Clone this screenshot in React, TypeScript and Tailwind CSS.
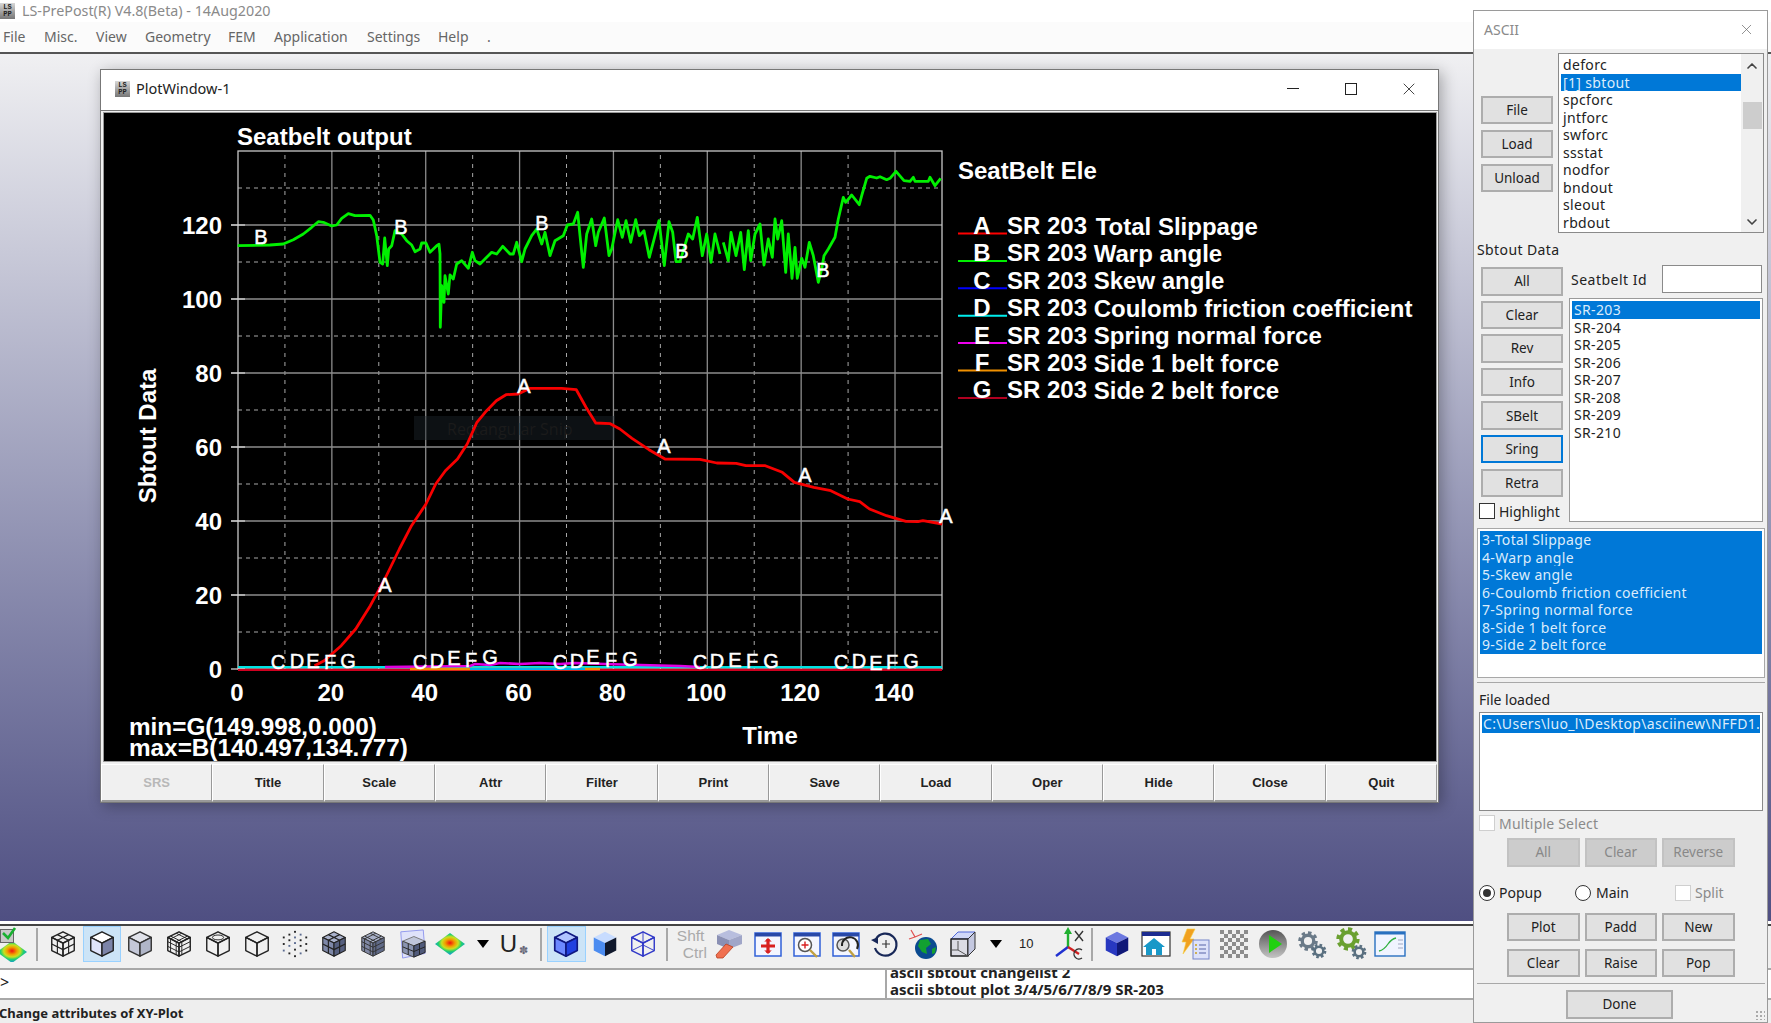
import type { ReactNode } from "react";
import { ChevronDown, ChevronUp, X } from "lucide-react";

const toPoints = (pts: number[][], ox: number, oy: number, sx: number, sy: number) =>
  pts.map(([x, y]) => `${(ox + x / sx).toFixed(1)},${(oy + y / sy).toFixed(1)}`).join(" ");

// traced off the reference, in zoomed crop coordinates
const greenA = [[53,320],[150,318],[190,315],[220,302],[250,285],[275,265],[295,248],[310,250],[335,261],[350,258],[365,238],[385,224],[405,230],[450,229],[460,243],[470,290],[480,370],[488,375],[494,297],[502,380],[506,330],[515,320],[525,275],[545,285],[560,305],[575,318],[585,338],[600,330],[605,312],[618,312],[630,340],[650,320],[657,316],[660,345],[661,565],[665,440],[672,490],[675,410],[685,465],[690,408],[700,420],[710,375],[725,365],[745,388],[757,340],[765,365],[780,375],[800,355],[815,340],[830,345],[848,322],[870,345],[880,345],[890,310],[905,368],[915,330],[935,290],[950,270],[965,315],[975,280],[990,350],[1005,305],[1030,290],[1042,258],[1060,255],[1073,220],[1080,290],[1090,385],[1100,285],[1115,240],[1127,320],[1135,280],[1153,237],[1167,350],[1175,330],[1193,242],[1207,295],[1218,245],[1232,310],[1247,242],[1258,290],[1272,275],[1288,355],[1317,245],[1333,380],[1347,248],[1358,280],[1368,368],[1380,368],[1405,285],[1418,300],[1432,235],[1447,350],[1460,285],[1473,370],[1485,285],[1500,345]];
const greenB = [[670,310],[685,365],[693,280],[708,350],[722,280],[733,392],[745,275],[752,365],[765,285],[780,255],[792,378],[805,300],[817,355],[825,240],[833,300],[845,245],[857,400],[865,285],[876,418],[885,325],[892,418],[905,358],[915,385],[928,310],[940,350],[955,430],[965,390],[972,350],[985,330],[1005,295],[1015,240],[1030,175],[1037,190],[1055,168],[1078,197],[1085,170],[1100,118],[1110,112],[1130,117],[1140,113],[1160,122],[1170,118],[1188,97],[1212,125],[1230,127],[1240,115],[1245,127],[1285,127],[1290,115],[1305,140],[1322,118]];
const red = [[195,860],[215,845],[250,800],[280,750],[310,680],[340,600],[370,510],[395,440],[425,375],[445,315],[465,275],[490,240],[510,195],[530,130],[550,95],[570,65],[590,47],[615,45],[640,28],[705,28],[735,32],[755,85],[775,132],[805,134],[825,150],[850,178],[885,212],[918,240],[990,241],[1025,252],[1065,253],[1085,260],[1125,260],[1160,280],[1185,310],[1225,325],[1260,335],[1295,360],[1320,368],[1340,390],[1375,410],[1415,427],[1440,428],[1450,425],[1490,435]];

const X0 = 238, X1 = 942, Y0 = 670, Y1 = 152;
const xAt = (t: number) => X0 + t * 4.693;
const yAt = (v: number) => Y0 - v * 3.7;

const curveLabels: [string, number, number][] = [
  ["B",261,238],["B",401,228],["B",542,224],["B",682,252],["B",823,271],
  ["A",385,586],["A",524,387],["A",664,447],["A",805,476],["A",946,517],
  ["C",278,663],["D",297,662],["E",313,662],["F",330,663],["G",348,662],
  ["C",420,663],["D",437,662],["E",454,659],["F",471,661],["G",490,658],
  ["C",560,663],["D",577,662],["E",593,658],["F",611,661],["G",630,660],
  ["C",700,663],["D",717,662],["E",735,661],["F",752,662],["G",771,662],
  ["C",841,663],["D",859,662],["E",876,664],["F",892,663],["G",911,662],
];

const legend = [
  ["A", "#ff0000", "Total Slippage"],
  ["B", "#00ee00", "Warp angle"],
  ["C", "#0000ff", "Skew angle"],
  ["D", "#00eeee", "Coulomb friction coefficient"],
  ["E", "#ee00ee", "Spring normal force"],
  ["F", "#f09000", "Side 1 belt force"],
  ["G", "#b00020", "Side 2 belt force"],
];

function Chart() {
  const solidX = [20, 40, 60, 80, 100, 120, 140];
  const dashX = [10, 30, 50, 70, 90, 110, 130];
  const solidY = [20, 40, 60, 80, 100, 120];
  const dashY = [10, 30, 50, 70, 90, 110, 130];
  return (
    <svg viewBox="104 114 1332 648" className="block w-[1332px] h-[648px]" fontFamily="'Liberation Sans', sans-serif" fill="#fff">
      <text x="237" y="137" dominantBaseline="central" fontSize="24" fontWeight="700">Seatbelt output</text>
      {dashX.map((t) => <line key={t} x1={xAt(t)} x2={xAt(t)} y1={156} y2={Y0} stroke="#a8a8a8" strokeDasharray="4 5" />)}
      {dashY.map((v) => <line key={v} x1={X0} x2={X1} y1={yAt(v)} y2={yAt(v)} stroke="#a8a8a8" strokeDasharray="4 4" />)}
      {solidX.map((t) => <line key={t} x1={xAt(t)} x2={xAt(t)} y1={Y1} y2={Y0} stroke="#8c8c8c" strokeWidth="1.3" />)}
      {solidY.map((v) => <line key={v} x1={231} x2={X1} y1={yAt(v)} y2={yAt(v)} stroke="#8c8c8c" strokeWidth="1.3" />)}
      <rect x={X0} y={Y1} width={X1 - X0} height={Y0 - Y1} fill="none" stroke="#c8c8c8" strokeWidth="1.3" />
      {[...solidY, 0].map((v) => <line key={v} x1={231} x2={245} y1={yAt(v)} y2={yAt(v)} stroke="#d0d0d0" strokeWidth="1.3" />)}

      <rect x="414" y="417" width="201" height="24" fill="#1c262c" fillOpacity="0.45" />
      <text x="447" y="430" dominantBaseline="central" fontSize="16" fill="#1b1b1b" fontFamily="'Open Sans', sans-serif">Rectangular Snip</text>

      <line x1={X0} x2={X1} y1="668" y2="668" stroke="#00e4e4" strokeWidth="2" />
      <polyline points="385,668 470,667 475,665 490,666 500,664 520,665 540,664 560,665 575,664 605,665 640,666 680,667 700,668" fill="none" stroke="#e000e0" strokeWidth="2.6" />
      <line x1={X0} x2={X1} y1="671" y2="671" stroke="#d00020" strokeWidth="2" />
      <line x1="410" x2="600" y1="670" y2="670" stroke="#f09000" strokeWidth="2.4" />
      <line x1="470" x2="585" y1="670" y2="670" stroke="#00b4f0" strokeWidth="2.2" />
      <polyline points={toPoints(greenA, 220, 140, 3, 3)} fill="none" stroke="#00f000" strokeWidth="2.8" strokeLinejoin="round" />
      <polyline points={toPoints(greenB, 500, 140, 3, 3)} fill="none" stroke="#00f000" strokeWidth="2.8" strokeLinejoin="round" />
      <polyline points={toPoints(red, 220, 380, 2.063, 3)} fill="none" stroke="#f80000" strokeWidth="2.8" strokeLinejoin="round" />
      <g stroke="#fff" strokeWidth="0.5">
        {curveLabels.map(([l, x, y], i) => (
          <text key={i} x={x} y={y} textAnchor="middle" dominantBaseline="central" fontSize="20">{l}</text>
        ))}
      </g>

      <g fontSize="24" fontWeight="700" dominantBaseline="central">
        {[0, 20, 40, 60, 80, 100, 120].map((v) => (
          <text key={v} x="222" y={yAt(v)} textAnchor="end">{v}</text>
        ))}
        {[0, 20, 40, 60, 80, 100, 120, 140].map((t) => (
          <text key={t} x={xAt(t) - 1} y="693" textAnchor="middle">{t}</text>
        ))}
        <text x="770" y="736" textAnchor="middle">Time</text>
        <text x="147" y="437" textAnchor="middle" transform="rotate(-90 147 437)">Sbtout Data</text>
        <text x="129" y="727" fontSize="24.3">min=G(149.998,0.000)</text>
        <text x="129" y="748" fontSize="24.3">max=B(140.497,134.777)</text>
        <text x="958" y="171">SeatBelt Ele</text>
        {legend.map(([l, c, t], i) => {
          const y = 226.5 + i * 27.4;
          return (
            <g key={l}>
              <line x1="958" x2="1007" y1={y + 8} y2={y + 8} stroke={c} strokeWidth="2" />
              <text x="982" y={y} textAnchor="middle">{l}</text>
              <text x="1007" y={y}>SR 203 <tspan dx={i === 0 ? 2 : 0}>{t}</tspan></text>
            </g>
          );
        })}
      </g>
    </svg>
  );
}

function LsLogo() {
  return (
    <div className="w-[15px] h-[16px] bg-linear-to-b from-[#d8d8d8] to-[#777] flex flex-col items-center justify-center text-[7px] leading-[7px] font-bold text-[#222] font-['Liberation_Mono',monospace]">
      <span>LS</span>
      <span>PP</span>
    </div>
  );
}

const TOP = "16,3 28,9 16,15 4,9";
const LEFT = "4,9 16,15 16,29 4,23";
const RIGHT = "28,9 16,15 16,29 28,23";

function Cube({ top = "none", left = "none", right = "none", stroke = "#222", w = 1.5, children }: { top?: string; left?: string; right?: string; stroke?: string; w?: number; children?: ReactNode }) {
  return (
    <svg width="30" height="32" viewBox="0 0 32 32">
      <g stroke={stroke} strokeWidth={w} strokeLinejoin="round">
        <polygon points={TOP} fill={top} />
        <polygon points={LEFT} fill={left} />
        <polygon points={RIGHT} fill={right} />
        {children}
      </g>
    </svg>
  );
}

const gridLines = (
  <g strokeWidth="1.2">
    <path d="M10 6 22 12 22 26M22 6 10 12 10 26M4 16 16 22 28 16" fill="none" />
  </g>
);

const fineLines = (
  <path d="M7 7.5 19 13.5V27.5M13 4.5 25 10.5M19 4.5 7 10.5V24.500M25 7.5 13 13.500V27.5M4 13.500 16 19.500 28 13.500M4 18.500 16 24.500 28 18.500" fill="none" strokeWidth="1" />
);

function Dotted() {
  return (
    <svg width="30" height="32" viewBox="0 0 32 32" fill="#222">
      {[[16,3],[10,6],[22,6],[4,9],[28,9],[16,9],[10,12],[22,12],[16,15],[4,16],[28,16],[10,18],[22,18],[16,22],[4,23],[28,23],[10,26],[22,26],[16,29]].map(([x, y], i) => (
        <rect key={i} x={x - 1} y={y - 1} width="2" height="2" fill={i % 3 === 2 ? "#5a6a90" : "#222"} />
      ))}
    </svg>
  );
}

function ContourDiamond({ id }: { id: string }) {
  return (
    <svg width="32" height="24" viewBox="0 0 32 24">
      <defs>
        <radialGradient id={id} cx="0.5" cy="0.45" r="0.55">
          <stop offset="0" stopColor="#f01010" />
          <stop offset="0.3" stopColor="#f0a000" />
          <stop offset="0.5" stopColor="#c8e020" />
          <stop offset="0.7" stopColor="#20d070" />
          <stop offset="1" stopColor="#1890e0" />
        </radialGradient>
      </defs>
      <polygon points="16,1 31,12 16,23 1,12" fill={`url(#${id})`} />
    </svg>
  );
}

function WindowFrame({ children, color = "#3060d8" }: { children: ReactNode; color?: string }) {
  return (
    <svg width="30" height="30" viewBox="0 0 30 30" fill="none">
      <rect x="2" y="4" width="26" height="23" fill="#f4f6ff" stroke={color} strokeWidth="1.5" />
      <rect x="2" y="4" width="26" height="3.5" fill="#2848a8" />
      {children}
    </svg>
  );
}

function Gear({ cx, cy, r, color = "#6a7a88" }: { cx: number; cy: number; r: number; color?: string }) {
  return (
    <g fill="none">
      <circle cx={cx} cy={cy} r={r} stroke={color} strokeWidth={r * 0.45} strokeDasharray={`${r * 0.42} ${r * 0.36}`} />
      <circle cx={cx} cy={cy} r={r * 0.72} stroke={color} strokeWidth={r * 0.42} />
    </g>
  );
}

const Slot = ({ children, active }: { children: ReactNode; active?: boolean }) => (
  <div className={active ? "w-[39px] h-[36px] flex items-center justify-center bg-[#cce4f7] border border-[#99d1ff]" : "w-[39px] h-[36px] flex items-center justify-center"}>
    {children}
  </div>
);
const Sep = () => <div className="w-[2px] h-[33px] bg-[#a8a8a8] shrink-0" />;
const Caret = () => <div className="w-0 h-0 border-l-[6px] border-r-[6px] border-t-[8px] border-l-transparent border-r-transparent border-t-black" />;

function Toolbar() {
  return (
    <div className="h-[44px] border-t-2 border-[#444] bg-[#f0f0f0] flex items-center pb-[6px] shrink-0 overflow-hidden">
      <div className="w-[28px] h-[36px] relative shrink-0 overflow-hidden">
        <div className="absolute left-[-4px] top-[14px]"><ContourDiamond id="contourA" /></div>
        <div className="absolute left-0 top-[3px] w-[14px] h-[14px] bg-[#c8c8c8] border border-[#666]" />
        <svg className="absolute left-[1px] top-0" width="16" height="16" viewBox="0 0 16 16"><path d="M2 7 7 12 14 2" fill="none" stroke="#18b030" strokeWidth="2.6" /></svg>
      </div>
      <div className="w-[8px]" />
      <Sep />
      <div className="w-[5.6px]" />
      <div className="flex items-center [&>div]:!w-[38.75px]">
        <Slot><Cube>{gridLines}</Cube></Slot>
        <Slot><div className="w-[38px] h-[36px] -m-px flex items-center justify-center bg-[#cce4f7] border border-[#99d1ff]"><Cube top="#fff" left="#dfe4fb" right="#7c84a8" /></div></Slot>
        <Slot><Cube top="#e0e2ea" left="#c4c8d8" right="#b0b6c8" stroke="#333" /></Slot>
        <Slot><Cube>{fineLines}</Cube></Slot>
        <Slot><Cube><ellipse cx="16" cy="9" rx="6" ry="2.6" fill="none" strokeWidth="1" /></Cube></Slot>
        <Slot><Cube /></Slot>
        <Slot><Dotted /></Slot>
        <Slot><Cube top="#aab2cc" left="#7e88a8" right="#566080" stroke="#222" w={1.2}>{gridLines}</Cube></Slot>
        <Slot><Cube top="#a8b0c8" left="#8088a4" right="#606a88" stroke="#333" w={1}>{fineLines}</Cube></Slot>
        <Slot>
          <svg width="30" height="32" viewBox="0 0 32 32">
            <polygon points="4,3 28,1 30,26 6,31" fill="#dfe2fa" stroke="#8f96ee" />
            <polygon points="18,8 30,13 18,18 6,13" fill="#c0c6da" stroke="#777" />
            <polygon points="6,13 18,18 18,30 6,25" fill="#8a94b0" stroke="#444" />
            <polygon points="30,13 18,18 18,30 30,25" fill="#505a7a" stroke="#222" />
            <path d="M12 15.500V27.500M24 15.500V27.500M6 19 18 24 30 19" fill="none" stroke="#222" strokeWidth="1" />
          </svg>
        </Slot>
        <Slot><ContourDiamond id="contourB" /></Slot>
      </div>
      <div className="w-[26px] flex justify-center shrink-0"><Caret /></div>
      <div className="w-[30px] flex items-end justify-center pl-[6px] shrink-0 font-['Liberation_Sans',sans-serif] text-[24px] leading-none text-[#222]">
        U<span className="text-[11px] text-[#667] ml-[2px]">✽</span>
      </div>
      <div className="w-[14px]" />
      <Sep />
      <div className="w-[5px]" />
      <Slot active>
        <Cube top="#b0c4ff" left="#6c88ff" right="#2040e0" stroke="#101880" w={1.8} />
      </Slot>
      <div className="w-[38px] flex justify-center shrink-0"><Cube top="#c8dcff" left="#4c8cf0" right="#10182c" stroke="none" /></div>
      <div className="w-[38px] flex justify-center shrink-0">
        <Cube stroke="#3038c8" w={1.5}><path d="M16 3V17M4 23 16 17 28 23" fill="none" strokeWidth="1" /></Cube>
      </div>
      <div className="w-[4px]" />
      <Sep />
      <div className="w-[4px]" />
      <div className="w-[38px] shrink-0 text-[15.500px] leading-[17px] text-[#aaa] font-['Liberation_Sans',sans-serif] pl-[5px]">
        <div>Shft</div>
        <div className="pl-[6px]">Ctrl</div>
      </div>
      <Slot>
        <svg width="30" height="30" viewBox="0 0 30 30">
          <polygon points="3,6 15,1 28,6 15,11" fill="#b8bede" />
          <polygon points="3,6 15,11 15,20 3,15" fill="#8a90b4" />
          <polygon points="28,6 15,11 15,20 28,15" fill="#a0a6c8" />
          <polygon points="2,26 12,15 19,18 9,29 3,29" fill="#f07050" stroke="#b84020" strokeWidth="0.8" />
        </svg>
      </Slot>
      <Slot>
        <WindowFrame>
          <path d="M15 10V24M8 17H22" stroke="#d82020" strokeWidth="3.2" />
          <path d="M12 12.500 15 9.500 18 12.500M12 21.500 15 24.500 18 21.500" fill="#d82020" stroke="#d82020" />
        </WindowFrame>
      </Slot>
      <Slot>
        <WindowFrame>
          <circle cx="13" cy="16" r="6.5" fill="#fff" stroke="#555" strokeWidth="1.5" />
          <path d="M13 12.500V19.500M9.500 16H16.500" stroke="#d82020" strokeWidth="1.4" />
          <path d="M18 21 25 28" stroke="#c0a040" strokeWidth="2.4" />
        </WindowFrame>
      </Slot>
      <Slot>
        <WindowFrame>
          <circle cx="12" cy="16" r="6" fill="#ddd" stroke="#555" strokeWidth="1.5" />
          <path d="M11 17 A8 8 0 1 1 26 20" fill="none" stroke="#222" strokeWidth="2" />
          <path d="M18 21 24 28" stroke="#c0a040" strokeWidth="2.4" />
        </WindowFrame>
      </Slot>
      <Slot>
        <svg width="30" height="30" viewBox="0 0 30 30" fill="none">
          <path d="M6 10A11 11 0 1 1 5 19" stroke="#182858" strokeWidth="2.2" />
          <path d="M1 11 8 8 8 15Z" fill="#182858" />
          <path d="M16 11V19M12 15H20" stroke="#333" strokeWidth="1.2" />
        </svg>
      </Slot>
      <Slot>
        <svg width="32" height="32" viewBox="0 0 32 32" fill="none">
          <path d="M3 2 7 9 1 11M7 9 14 6" stroke="#e05050" strokeWidth="1.2" />
          <circle cx="18" cy="20" r="11" fill="#0a4a90" />
          <path d="M12 12 20 11 23 16 18 20 19 26 14 24 10 18Z" fill="#12a030" />
          <path d="M24 21 28 19 27 25 24 26Z" fill="#12a030" />
        </svg>
      </Slot>
      <Slot>
        <svg width="30" height="30" viewBox="0 0 30 30" fill="none" strokeLinejoin="round">
          <polygon points="3,10 10,3 27,3 20,10" fill="#d0d8f8" stroke="#5068d8" />
          <polygon points="3,10 20,10 20,27 3,27" fill="#dcdce4" stroke="#222" strokeWidth="1.5" />
          <polygon points="20,10 27,3 27,20 20,27" fill="#c4c8e0" stroke="#333" />
          <path d="M10 12V21H3M10 21 20 27" stroke="#555" />
        </svg>
      </Slot>
      <div className="w-[27px] flex justify-center shrink-0"><Caret /></div>
      <div className="w-[33px] text-center shrink-0 text-[13px] text-[#222] font-['Liberation_Sans',sans-serif]">10</div>
      <div className="w-[8px]" />
      <div className="w-[40px] flex justify-center shrink-0">
        <svg width="34" height="34" viewBox="0 0 34 34" fill="none">
          <path d="M14 20V5" stroke="#20b030" strokeWidth="2.4" />
          <path d="M10 7 14 0 18 7Z" fill="#20b030" />
          <path d="M14 20 2 29" stroke="#2030d0" strokeWidth="2.4" />
          <path d="M14 20 25 27" stroke="#d02020" strokeWidth="2.4" />
          <path d="M21 4 29 14M29 4 21 14" stroke="#333" strokeWidth="1.4" />
          <path d="M28 23A5 5 0 1 0 28 31" stroke="#333" strokeWidth="1.4" />
        </svg>
      </div>
      <Sep />
      <div className="w-[5px]" />
      <Slot><Cube top="#6c78e0" left="#2838c0" right="#101878" stroke="none" /></Slot>
      <Slot>
        <svg width="30" height="28" viewBox="0 0 30 28">
          <rect x="1" y="2" width="28" height="24" fill="#fff" stroke="#333" strokeWidth="1.2" />
          <rect x="1" y="2" width="28" height="4" fill="#1c2c90" />
          <polygon points="13,8 24,17 21,17 21,25 5,25 5,17 2,17" fill="#1898c8" />
          <rect x="11" y="19" width="4" height="6" fill="#fff" />
        </svg>
      </Slot>
      <Slot>
        <svg width="32" height="32" viewBox="0 0 32 32">
          <polygon points="8,1 16,1 11,11 15,11 4,26 7,14 3,14" fill="#f0a020" stroke="#f8d040" strokeWidth="0.6" />
          <rect x="14" y="12" width="16" height="19" fill="#dde2fa" stroke="#7484c8" />
          <path d="M20 17H27M20 21H27M20 25H27" stroke="#5864a8" strokeWidth="1.2" />
          <path d="M16 17H18M16 21H18M16 25H18" stroke="#c8a020" strokeWidth="1.4" />
        </svg>
      </Slot>
      <Slot>
        <svg width="30" height="30" viewBox="0 0 30 30" fill="#8c8c8c">
          {[0, 1, 2, 3, 4, 5, 6].flatMap((r) => [0, 1, 2, 3, 4, 5, 6].filter((c) => (r + c) % 2 === 0).map((c) => (
            <rect key={`${r}-${c}`} x={1 + c * 4} y={1 + r * 4} width="4" height="4" />
          )))}
        </svg>
      </Slot>
      <Slot>
        <svg width="30" height="30" viewBox="0 0 30 30">
          <defs>
            <linearGradient id="playBg" x1="0" y1="0" x2="0" y2="1">
              <stop offset="0" stopColor="#555" />
              <stop offset="1" stopColor="#c4c4c4" />
            </linearGradient>
          </defs>
          <circle cx="15" cy="15" r="14" fill="url(#playBg)" />
          <polygon points="11,6 24,15 11,24" fill="#20d010" />
        </svg>
      </Slot>
      <Slot>
        <svg width="32" height="32" viewBox="0 0 32 32">
          <Gear cx={12} cy={13} r={8} />
          <Gear cx={23} cy={23} r={6} color="#5a7080" />
        </svg>
      </Slot>
      <Slot>
        <svg width="34" height="34" viewBox="0 0 34 34">
          <Gear cx={14} cy={12} r={9.5} color="#6aa030" />
          <Gear cx={25} cy={25} r={6} color="#5a7080" />
        </svg>
      </Slot>
      <Slot>
        <svg width="32" height="26" viewBox="0 0 32 26" fill="none">
          <rect x="1" y="1" width="30" height="24" fill="#f0f4ff" stroke="#2870c0" strokeWidth="1.4" />
          <rect x="1" y="1" width="30" height="2.500" fill="#2870c0" />
          <path d="M5 20C10 19 12 16 14 13S18 8 22 7" stroke="#30b040" strokeWidth="1.3" />
          <path d="M24 9H29M24 13H29M24 17H29" stroke="#a0a8c0" />
        </svg>
      </Slot>
    </div>
  );
}

const Btn = ({ children, className }: { children: ReactNode; className: string }) => (
  <div className={`h-[28.500px] bg-[#e1e1e1] border-2 border-[#adadad] flex items-center justify-center text-[13.500px] text-[#222] ${className}`}>{children}</div>
);
const OffBtn = ({ children }: { children: ReactNode }) => (
  <div className="w-[72.500px] h-[28.500px] bg-[#cccccc] border-2 border-[#c2c2c2] flex items-center justify-center text-[13.500px] text-[#888]">{children}</div>
);
const Row = ({ children, sel }: { children: ReactNode; sel?: boolean }) => (
  <div className={sel ? "h-[17.500px] leading-[17.500px] tracking-[0.35px] bg-[#0078d7] text-[#dcecfb] whitespace-nowrap overflow-hidden" : "h-[17.500px] leading-[17.500px] tracking-[0.35px] text-[#222] whitespace-nowrap"}>{children}</div>
);
const Check = ({ off }: { off?: boolean }) => (
  <div className={off ? "w-[16px] h-[16px] bg-white border border-[#cfcfcf] shrink-0" : "w-[16px] h-[16px] bg-white border border-[#333] shrink-0"} />
);

function AsciiPanel() {
  const files = ["deforc", "[1] sbtout", "spcforc", "jntforc", "swforc", "ssstat", "nodfor", "bndout", "sleout", "rbdout"];
  const ids = ["SR-203", "SR-204", "SR-205", "SR-206", "SR-207", "SR-208", "SR-209", "SR-210"];
  const data = ["3-Total Slippage", "4-Warp angle", "5-Skew angle", "6-Coulomb friction coefficient", "7-Spring normal force", "8-Side 1 belt force", "9-Side 2 belt force"];
  return (
    <div className="absolute left-[1473px] top-[10px] w-[295px] h-[1013px] bg-[#f0f0f0] border border-[#9a9a9a] text-[14px] text-[#222] font-['Noto_Sans',sans-serif]">
      <div className="h-[38px] bg-white flex items-center justify-between pl-[10px] pr-[12px] pb-[2px] text-[#8a8a8a]">
        <span>ASCII</span>
        <X className="w-[17px] h-[17px] text-[#666]" strokeWidth={1} />
      </div>

      <div className="flex h-[180px] mt-[4px] pl-[7px]">
        <div className="w-[72px] pt-[42.500px] flex flex-col gap-[5.500px]">
          <Btn className="w-[72px]">File</Btn>
          <Btn className="w-[72px]">Load</Btn>
          <Btn className="w-[72px]">Unload</Btn>
        </div>
        <div className="ml-[5px] w-[206px] border border-[#8a8a8a] bg-white flex">
          <div className="w-[182px] pl-[2px] pt-[2px]">
            {files.map((f) => <Row key={f} sel={f === "[1] sbtout"}><span className="pl-[2px]">{f}</span></Row>)}
          </div>
          <div className="w-[22px] bg-[#f0f0f0] flex flex-col items-center pt-[4px]">
            <ChevronUp className="w-[16px] h-[16px] text-[#444]" strokeWidth={2.5} />
            <div className="w-[19px] h-[27px] bg-[#cdcdcd] mt-[28px]" />
            <ChevronDown className="w-[16px] h-[16px] text-[#444] mt-[85px]" strokeWidth={2.5} />
          </div>
        </div>
      </div>

      <div className="h-[20px] leading-[20px] tracking-[0.4px] mt-[7px] pl-[3px]">Sbtout Data</div>

      <div className="flex h-[257px] mt-[5px] pl-[7px]">
        <div className="w-[88px] pt-[2px] flex flex-col gap-[5.100px]">
          {["All", "Clear", "Rev", "Info", "SBelt"].map((b) => <Btn key={b} className="w-[82px]">{b}</Btn>)}
          <Btn className="w-[82px] !border-[#0078d7]">Sring</Btn>
          <Btn className="w-[82px]">Retra</Btn>
          <div className="flex items-center gap-[4px] -ml-[2px] mt-[1px] h-[16px]"><Check /><span>Highlight</span></div>
        </div>
        <div className="w-[194px]">
          <div className="flex items-center h-[28px]">
            <span className="pl-[2px] w-[93px] tracking-[0.5px]">Seatbelt Id</span>
            <div className="w-[100px] h-[28px] bg-white border border-[#8a8a8a]" />
          </div>
          <div className="mt-[5px] h-[224px] border border-[#9a9a9a] bg-white pt-[2px] px-[2px]">
            {ids.map((s, i) => <Row key={s} sel={i === 0}><span className="pl-[2px]">{s}</span></Row>)}
          </div>
        </div>
      </div>

      <div className="ml-[3px] mt-[6px] w-[288px] h-[150px] border border-[#a8a8a8] bg-white p-[2px]">
        {data.map((d) => <Row key={d} sel><span className="pl-[2px]">{d}</span></Row>)}
      </div>

      <div className="ml-[3px] mt-[4px] w-[288px] h-px bg-[#a8a8a8]" />
      <div className="h-[20px] leading-[20px] mt-[7px] pl-[5px]">File loaded</div>
      <div className="ml-[5px] mt-[2px] w-[284px] h-[99px] border border-[#8a8a8a] bg-white p-[2px] overflow-hidden">
        <Row sel><span className="pl-[1px]">C:\Users\luo_l\Desktop\asciinew\NFFD1.</span></Row>
      </div>

      <div className="flex items-center gap-[4px] ml-[5px] mt-[4px] h-[16px] tracking-[0.2px] text-[#8a8a8a]"><Check off /><span>Multiple Select</span></div>
      <div className="flex gap-[5px] ml-[33px] mt-[7px]">
        <OffBtn>All</OffBtn>
        <OffBtn>Clear</OffBtn>
        <OffBtn>Reverse</OffBtn>
      </div>

      <div className="flex items-center ml-[5px] mt-[18px] h-[16px]">
        <div className="w-[16px] h-[16px] rounded-full border border-[#333] bg-white flex items-center justify-center">
          <div className="w-[8px] h-[8px] rounded-full bg-[#333]" />
        </div>
        <span className="ml-[4px] w-[76px]">Popup</span>
        <div className="w-[16px] h-[16px] rounded-full border border-[#333] bg-white" />
        <span className="ml-[5px] w-[79px]">Main</span>
        <Check off />
        <span className="ml-[4px] text-[#8a8a8a]">Split</span>
      </div>

      <div className="grid grid-cols-[72.500px_72.500px_72.500px] gap-x-[5px] gap-y-[7.500px] ml-[33px] mt-[12px]">
        {["Plot", "Padd", "New", "Clear", "Raise", "Pop"].map((b) => <Btn key={b} className="w-[72.500px]">{b}</Btn>)}
      </div>

      <div className="ml-[3px] mt-[6px] w-[288px] h-px bg-[#a8a8a8]" />
      <div className="mt-[6px] flex justify-center pr-[2px]">
        <Btn className="w-[107px]">Done</Btn>
      </div>
      <div className="absolute right-[2px] bottom-[2px] w-[10px] h-[10px] bg-[radial-gradient(#aaa_1px,transparent_1.500px)] bg-[length:4px_4px]" />
    </div>
  );
}

function PlotWindow() {
  const buttons = ["SRS", "Title", "Scale", "Attr", "Filter", "Print", "Save", "Load", "Oper", "Hide", "Close", "Quit"];
  return (
    <div className="absolute left-[100px] top-[69px] w-[1339px] h-[734px] bg-[#f0f0f0] border border-[#777] shadow-[3px_3px_14px_rgba(0,0,0,0.3)]">
      <div className="h-[41px] bg-white border-b border-[#777] flex items-center pl-[14px] pb-[2px] relative">
        <LsLogo />
        <span className="ml-[6px] text-[14.500px] text-[#222] font-['Noto_Sans',sans-serif]">PlotWindow-1</span>
        <div className="absolute right-[0.500px] top-0 h-full pb-[3px] flex items-center text-[#222]">
          <div className="w-[58px] flex justify-center"><div className="w-[12px] h-px bg-[#222]" /></div>
          <div className="w-[58px] flex justify-center"><div className="w-[12px] h-[12px] border border-[#222]" /></div>
          <div className="w-[58px] flex justify-center"><X className="w-[20px] h-[20px]" strokeWidth={1} /></div>
        </div>
      </div>
      <div className="ml-[3px] mt-[2px] w-[1332px] h-[648px] bg-black outline outline-1 outline-[#9a9a9a]">
        <Chart />
      </div>
      <div className="flex mr-px mt-[3px] h-[38px] font-['Liberation_Sans',sans-serif]">
        {buttons.map((b, i) => (
          <div key={b} className={i === 0 ? "flex-1 flex items-center justify-center text-[13px] font-bold text-[#b8b8b8] border-l border-t border-white border-r border-b-2 border-r-[#999] border-b-[#999]" : "flex-1 flex items-center justify-center text-[13px] font-bold text-[#222] border-l border-t border-white border-r border-b-2 border-r-[#999] border-b-[#999]"}>
            {b}
          </div>
        ))}
      </div>
    </div>
  );
}

export default function App() {
  const menu = [
    ["File", "w-[41px]"], ["Misc.", "w-[52px]"], ["View", "w-[49px]"], ["Geometry", "w-[83px]"], ["FEM", "w-[46px]"],
    ["Application", "w-[93px]"], ["Settings", "w-[71px]"], ["Help", "w-[49px]"], [".", "w-[10px]"],
  ];
  return (
    <div className="relative w-[1771px] h-[1023px] flex flex-col overflow-hidden bg-white font-['Noto_Sans',sans-serif]">
      <div className="h-[22px] bg-white flex items-center shrink-0">
        <LsLogo />
        <span className="ml-[7px] text-[14.300px] text-[#8a8a8a]">LS-PrePost(R) V4.8(Beta) - 14Aug2020</span>
      </div>
      <div className="h-[30px] bg-[#fbfbfb] flex items-center pl-[3px] pb-[2px] text-[14px] text-[#666] shrink-0">
        {menu.map(([m, w]) => <span key={m} className={w}>{m}</span>)}
      </div>
      <div className="h-[2px] bg-[#555] shrink-0" />
      <div className="flex-1 bg-linear-to-b from-[#f0f0f2] to-[#4f4f82]" />
      <div className="h-[3px] bg-white shrink-0" />
      <Toolbar />
      <div className="h-[2px] bg-[#a8a8a8] shrink-0" />
      <div className="h-[28px] bg-white flex shrink-0 overflow-hidden">
        <div className="w-[885px] pt-[1px] text-[16px] leading-[22px] text-[#222]">&gt;</div>
        <div className="w-[2px] bg-[#a8a8a8]" />
        <div className="flex-1 flex flex-col justify-end pl-[3px] text-[15px] leading-[17px] font-bold text-[#222] whitespace-nowrap">
          <div>ascii sbtout changelist 2</div>
          <div>ascii sbtout plot 3/4/5/6/7/8/9 SR-203</div>
        </div>
      </div>
      <div className="h-[2px] bg-[#a8a8a8] shrink-0" />
      <div className="h-[23px] bg-[#eeeeee] flex items-center pt-[5px] -indent-[1px] text-[13px] font-bold text-[#222] shrink-0 overflow-hidden">Change attributes of XY-Plot</div>
      <PlotWindow />
      <AsciiPanel />
    </div>
  );
}
